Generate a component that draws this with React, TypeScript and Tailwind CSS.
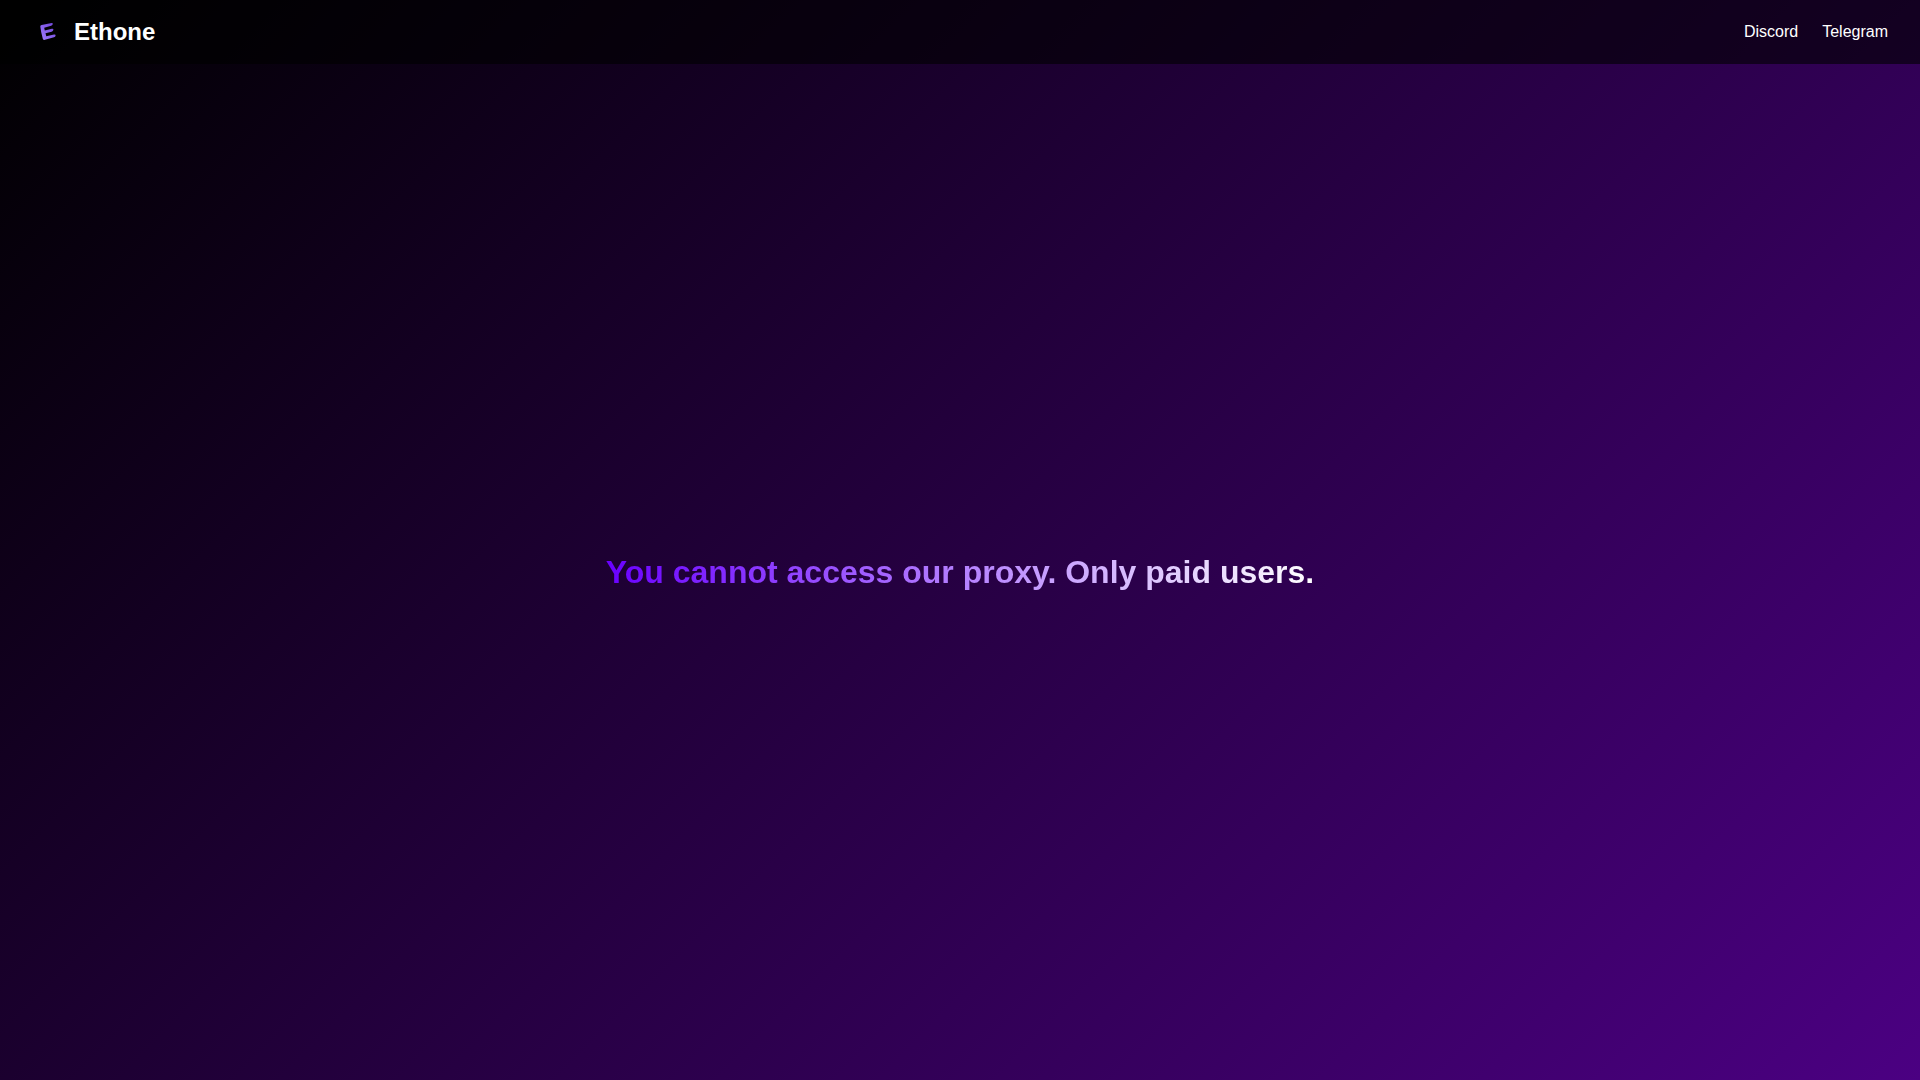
export default function App() {
  return (
    <div className="flex min-h-screen flex-col bg-[linear-gradient(135deg,#000000,#4b0082)] font-['Liberation_Sans',Arial,sans-serif] text-white">
      <header className="flex h-16 items-center justify-between bg-black/60 px-8">
        <div className="flex items-center gap-2.5">
          <svg viewBox="0 0 32 32" className="size-8" aria-hidden="true">
            <defs>
              <linearGradient id="mark" x1="1" y1="0" x2="0" y2="1">
                <stop offset="0" stopColor="#6d43d6" />
                <stop offset="1" stopColor="#a07cff" />
              </linearGradient>
            </defs>
            <path
              d="M8.3 10.4 Q8.2 9.4 9.6 9 L19.6 6.9 Q21 6.7 20.8 8.1 Q20.6 9.4 19.2 9.8 L12.2 11.8 L12.8 14.6 L19.9 12.8 Q21.6 12.5 21.4 13.8 Q21.2 15.3 19.6 15.7 L13.5 17.3 L14.3 20.3 L22 18.5 Q23.8 18.2 23.6 19.5 Q23.4 20.9 22 21.3 L13 23.8 Q11.3 24.2 10.8 22.7 Q8.8 15.4 8.3 10.4 Z"
              fill="url(#mark)"
            />
          </svg>
          <span className="text-2xl font-bold">Ethone</span>
        </div>
        <nav className="flex gap-6">
          <a href="#discord">Discord</a>
          <a href="#telegram">Telegram</a>
        </nav>
      </header>
      <main className="flex flex-1 items-center justify-center">
        <h1 className="bg-[linear-gradient(90deg,#6a00ff,#ffffff)] bg-clip-text text-[32px] font-bold text-transparent">
          You cannot access our proxy. Only paid users.
        </h1>
      </main>
    </div>
  );
}
